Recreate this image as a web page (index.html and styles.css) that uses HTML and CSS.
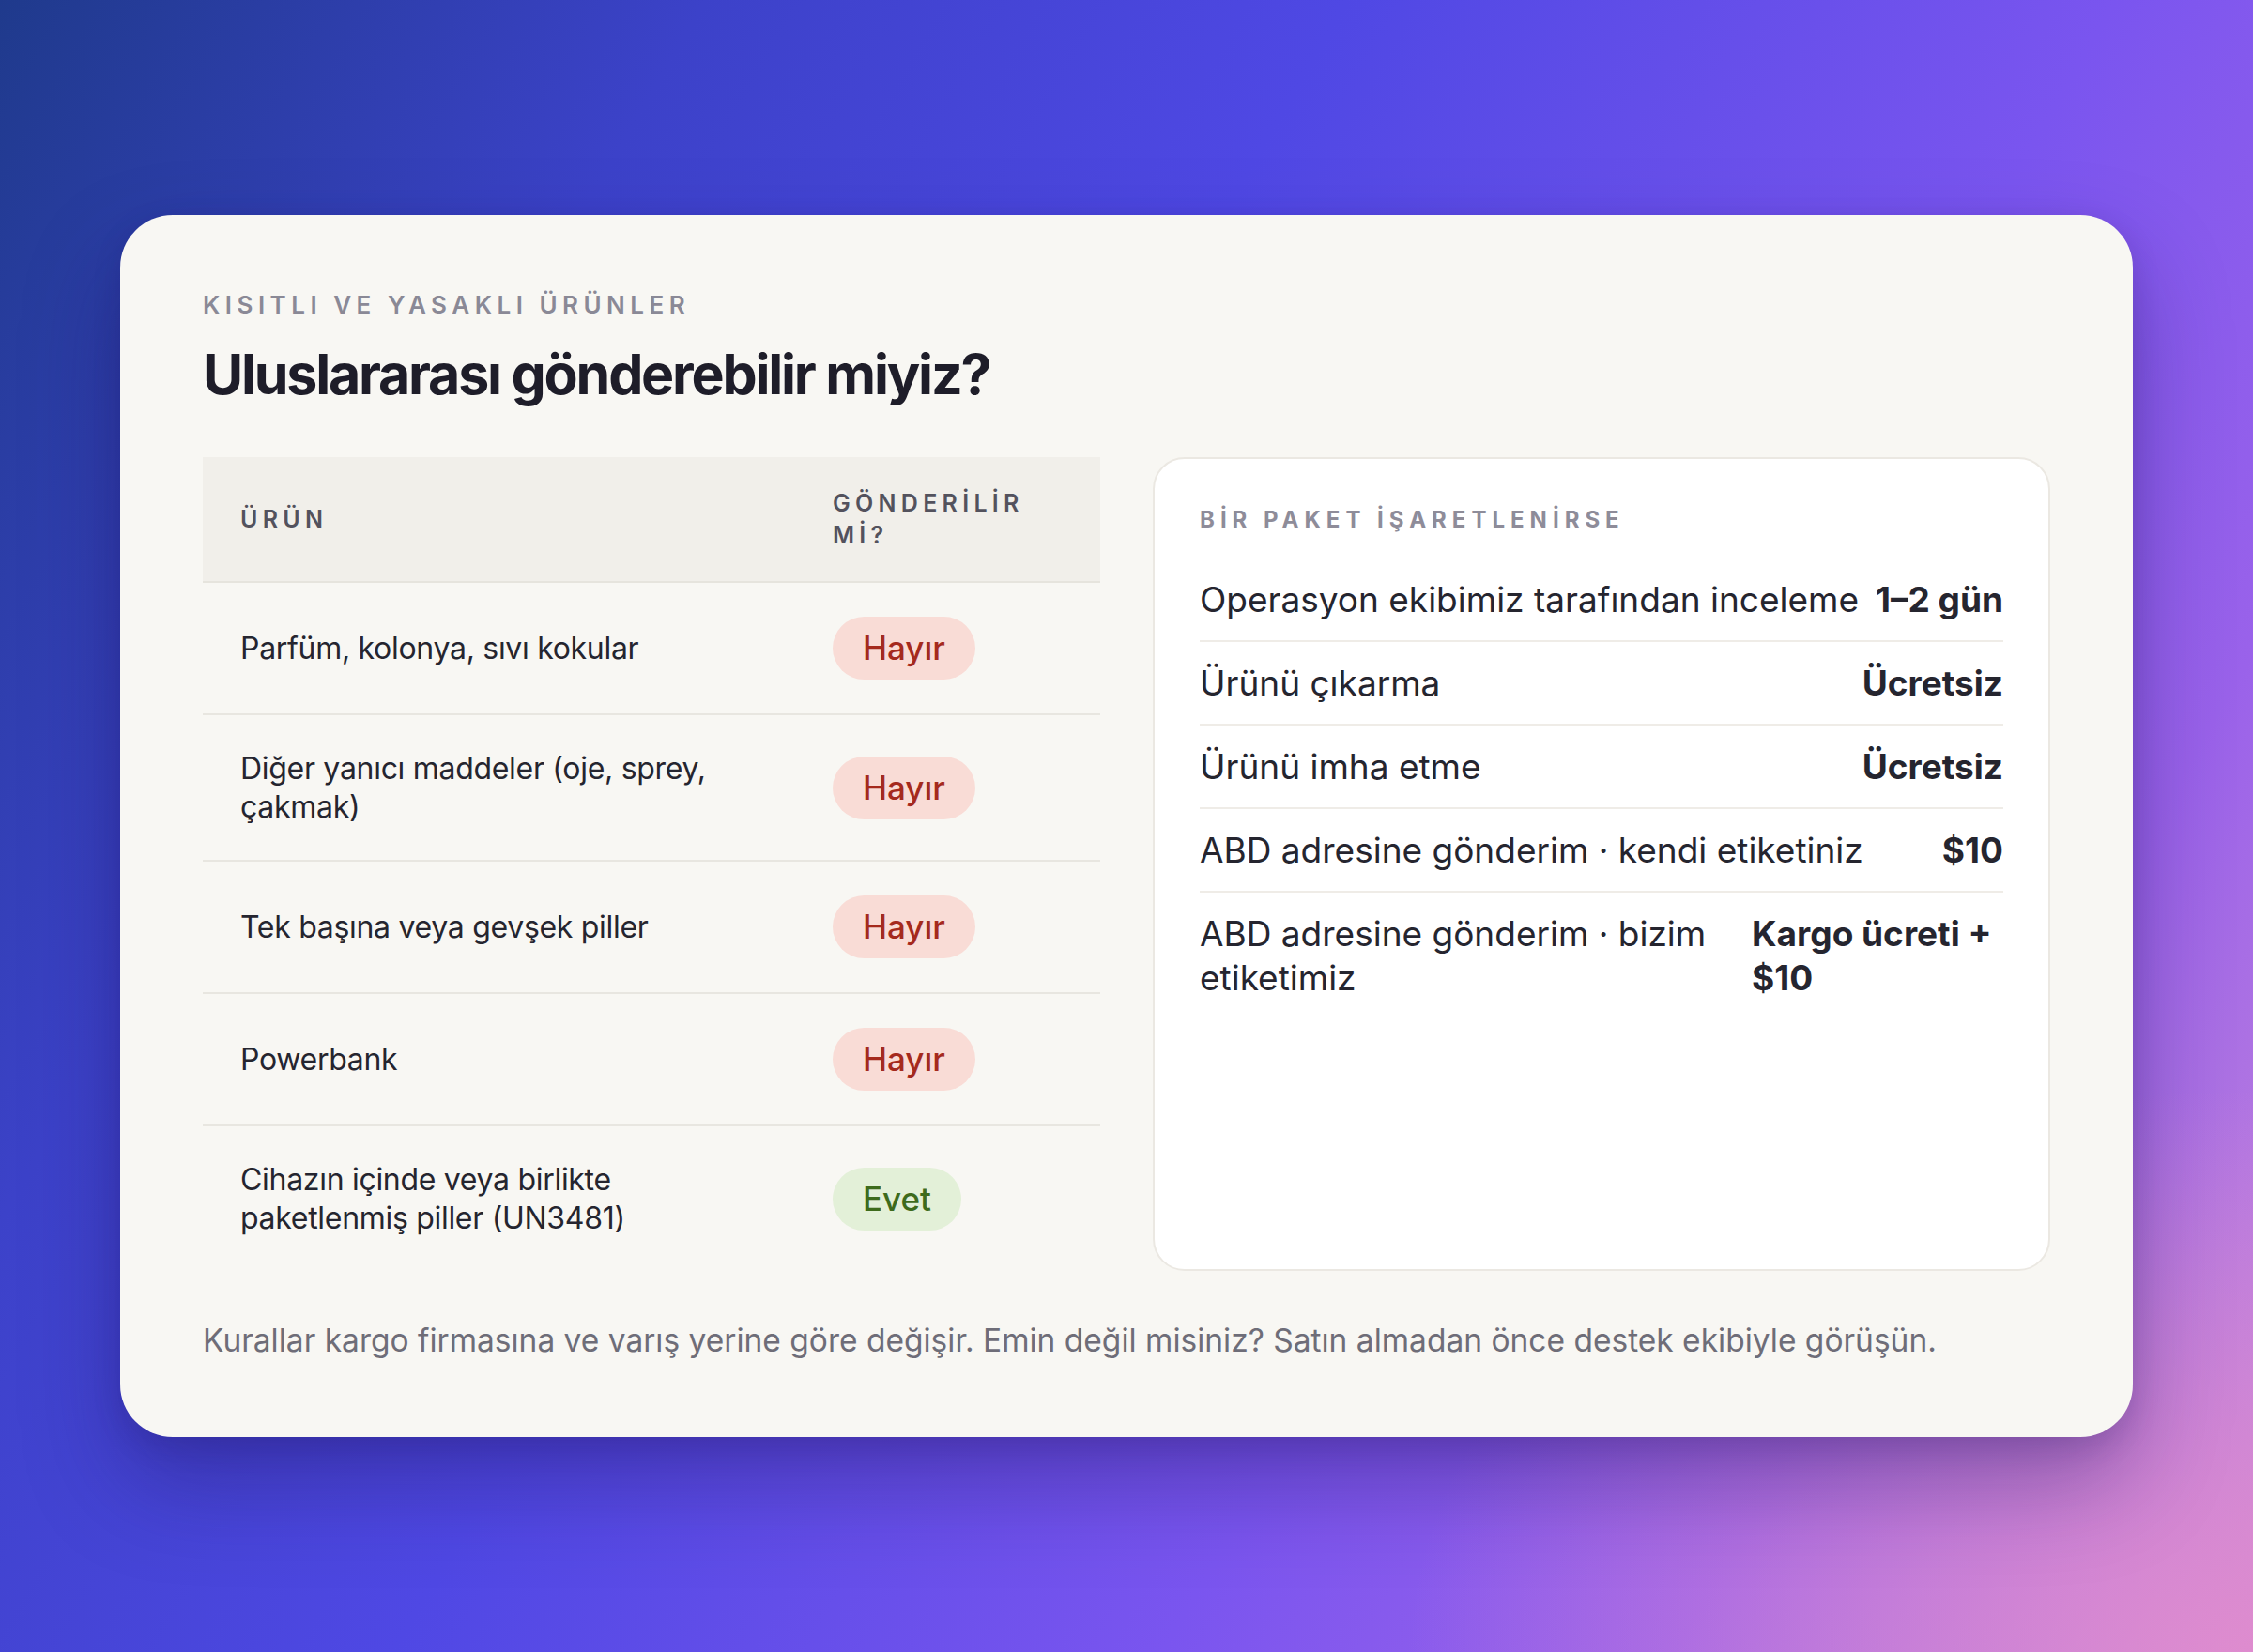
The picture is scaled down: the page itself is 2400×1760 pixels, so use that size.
FILE: index.html
```html
<!DOCTYPE html>
<html lang="tr">
<head>
<meta charset="utf-8">
<title>Kısıtlı ve yasaklı ürünler</title>
<link rel="stylesheet" href="styles.css">
</head>
<body>
<main class="card">
  <p class="eyebrow">Kısıtlı ve yasaklı ürünler</p>
  <h1 class="title">Uluslararası gönderebilir miyiz?</h1>

  <div class="grid">
    <table class="items">
      <colgroup>
        <col class="col-item">
        <col class="col-status">
      </colgroup>
      <thead>
        <tr>
          <th>Ürün</th>
          <th>Gönderilir mi?</th>
        </tr>
      </thead>
      <tbody>
        <tr>
          <td>Parfüm, kolonya, sıvı kokular</td>
          <td><span class="pill pill-no">Hayır</span></td>
        </tr>
        <tr>
          <td>Diğer yanıcı maddeler (oje, sprey, çakmak)</td>
          <td><span class="pill pill-no">Hayır</span></td>
        </tr>
        <tr>
          <td>Tek başına veya gevşek piller</td>
          <td><span class="pill pill-no">Hayır</span></td>
        </tr>
        <tr>
          <td>Powerbank</td>
          <td><span class="pill pill-no">Hayır</span></td>
        </tr>
        <tr>
          <td>Cihazın içinde veya birlikte paketlenmiş piller (UN3481)</td>
          <td><span class="pill pill-yes">Evet</span></td>
        </tr>
      </tbody>
    </table>

    <section class="panel">
      <p class="panel-eyebrow">Bir paket işaretlenirse</p>
      <div class="fee-row">
        <span class="fee-label">Operasyon ekibimiz tarafından inceleme</span>
        <span class="fee-value">1–2 gün</span>
      </div>
      <div class="fee-row">
        <span class="fee-label">Ürünü çıkarma</span>
        <span class="fee-value">Ücretsiz</span>
      </div>
      <div class="fee-row">
        <span class="fee-label">Ürünü imha etme</span>
        <span class="fee-value">Ücretsiz</span>
      </div>
      <div class="fee-row">
        <span class="fee-label">ABD adresine gönderim · kendi etiketiniz</span>
        <span class="fee-value">$10</span>
      </div>
      <div class="fee-row fee-row-wrap">
        <span class="fee-label">ABD adresine gönderim · bizim etiketimiz</span>
        <span class="fee-value">Kargo ücreti + $10</span>
      </div>
    </section>
  </div>

  <p class="footnote">Kurallar kargo firmasına ve varış yerine göre değişir. Emin değil misiniz? Satın almadan önce destek ekibiyle görüşün.</p>
</main>
</body>
</html>
```

FILE: styles.css
```css
* { box-sizing: border-box; }

html, body { height: 100%; }

body {
  margin: 0;
  min-height: 100vh;
  display: flex;
  align-items: center;
  justify-content: center;
  font-family: Inter, "Noto Sans", "Liberation Sans", sans-serif;
  color: #24242e;
  background:
    radial-gradient(ellipse 900px 600px at 100% 100%, rgba(226, 140, 205, 0.85), rgba(226, 140, 205, 0) 100%),
    linear-gradient(120deg, #1f3a8c 0%, #3c42c9 22%, #4f48e4 42%, #7a55ef 66%, #9a62ea 82%, #c98ad8 100%);
}

.card {
  width: 2144px;
  background: #f8f7f3;
  border-radius: 56px;
  padding: 80px 88px;
  box-shadow: 0 50px 100px rgba(30, 16, 90, 0.35), 0 10px 30px rgba(30, 16, 90, 0.15);
}

.eyebrow {
  margin: 0;
  font-size: 26px;
  line-height: 31px;
  font-weight: 600;
  letter-spacing: 5.5px;
  text-transform: uppercase;
  color: #8a8996;
}

.title {
  margin: 24px 0 0;
  font-size: 59px;
  line-height: 69px;
  font-weight: 700;
  letter-spacing: -2.2px;
  color: #1e1d29;
}

.grid {
  margin-top: 54px;
  display: grid;
  grid-template-columns: 1fr 1fr;
  gap: 56px;
  align-items: stretch;
}

/* table */
.items {
  width: 100%;
  border-collapse: collapse;
  table-layout: fixed;
  align-self: start;
}

.col-item { width: 66%; }
.col-status { width: 34%; }

.items th {
  background: #f1efea;
  text-align: left;
  vertical-align: middle;
  padding: 32px 40px;
  font-size: 25px;
  line-height: 34px;
  font-weight: 600;
  letter-spacing: 5.3px;
  text-transform: uppercase;
  color: #53525d;
  border-bottom: 2px solid #e6e4dd;
}

.items td {
  padding: 36px 40px;
  vertical-align: middle;
  font-size: 32px;
  line-height: 41px;
  letter-spacing: -0.3px;
  color: #25252f;
  border-bottom: 2px solid #e8e6e0;
}

.items tbody tr:last-child td { border-bottom: none; }

.pill {
  display: inline-block;
  padding: 12px 32px;
  border-radius: 999px;
  font-size: 35px;
  line-height: 43px;
  font-weight: 500;
  letter-spacing: 0;
}

.pill-no { background: #f9dcd6; color: #a52a1d; }
.pill-yes { background: #e3f0d8; color: #3e6b1c; }

/* panel */
.panel {
  background: #ffffff;
  border: 2px solid #ebe8e2;
  border-radius: 34px;
  padding: 48px;
}

.panel-eyebrow {
  margin: 0 0 24px;
  font-size: 24px;
  line-height: 34px;
  font-weight: 700;
  letter-spacing: 6px;
  text-transform: uppercase;
  color: #8e8c99;
}

.fee-row {
  display: flex;
  justify-content: space-between;
  padding: 20px 0;
  border-bottom: 2px solid #efece7;
  font-size: 37px;
  line-height: 47px;
  color: #25252f;
}

.fee-row:last-child { border-bottom: none; }

.fee-label { min-width: 0; }

.fee-value {
  flex: none;
  font-weight: 700;
  white-space: nowrap;
}

.fee-row-wrap { gap: 22px; }

.fee-row-wrap .fee-value {
  flex: none;
  width: 268px;
  white-space: normal;
}

.footnote {
  margin: 51px 0 0;
  font-size: 33.5px;
  line-height: 46px;
  color: #6e6d78;
}
```
